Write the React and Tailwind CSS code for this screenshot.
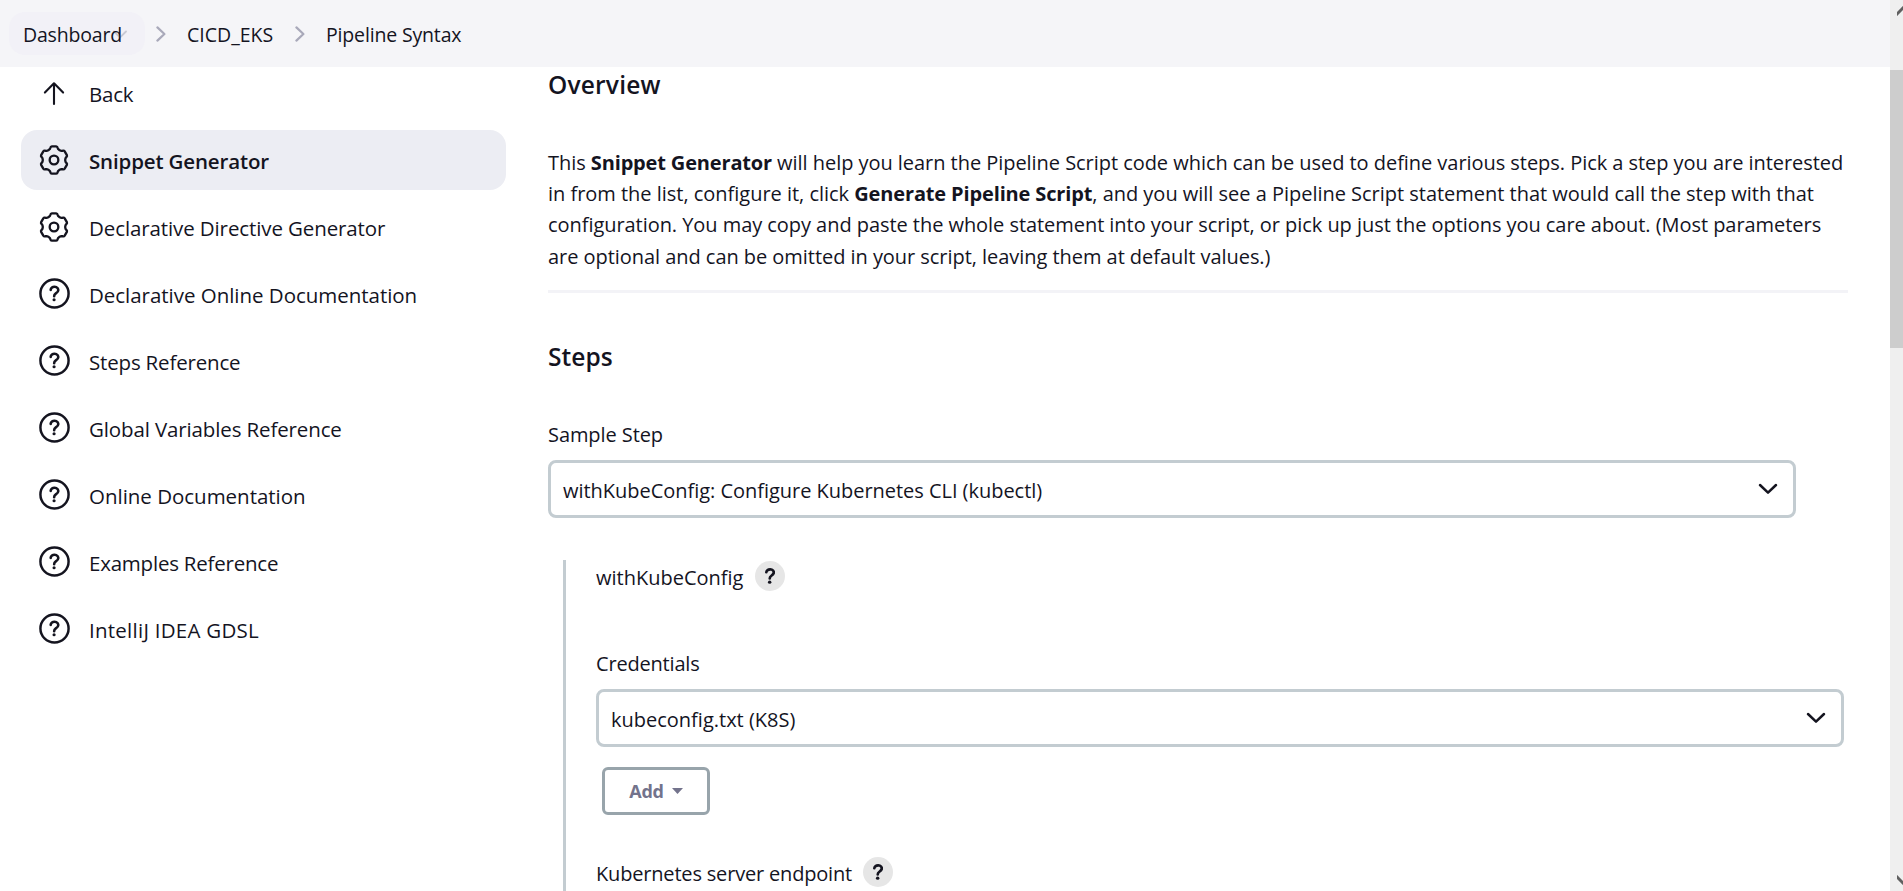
import React from "react";

const QUESTION =
  "M200 202.29s.84-17.5 19.57-32.57C230.68 160.77 244 158.18 256 158c10.93-.14 20.69 1.67 26.53 4.45 10 4.76 29.47 16.38 29.47 41.09 0 26-17 37.81-36.37 50.8S251 281.43 251 296";

// One sixth of the gear outline, drawn around the origin and rotated six times.
const SEXTANT = [[-11, -36.5], [-10, -40.6], [-6.5, -40.8], [6.5, -40.8], [10, -40.6], [11, -36.5], [12.5, -32.7], [16.3, -28.2], [22.1, -27.2]];

function gearPath() {
  let d = "";
  for (let i = 0; i < 6; i++) {
    const a = (i * Math.PI) / 3;
    const p = SEXTANT.map(([x, y]) =>
      `${(x * Math.cos(a) - y * Math.sin(a)).toFixed(2)} ${(x * Math.sin(a) + y * Math.cos(a)).toFixed(2)}`
    );
    d += `${i ? "L" : "M"}${p[0]}Q${p[1]} ${p[2]}L${p[3]}Q${p[4]} ${p[5]}L${p[6]}Q${p[7]} ${p[8]}`;
  }
  return d + "Z";
}
const GEAR = gearPath();

function GearIcon() {
  return (
    <svg viewBox="-48 -48 96 96" className="mr-px size-8" fill="none" stroke="currentColor" strokeWidth="7" strokeLinejoin="round">
      <path d={GEAR} />
      <circle r="13" />
    </svg>
  );
}

function HelpIcon() {
  return (
    <svg viewBox="0 0 512 512" className="size-[35px]" fill="none" stroke="currentColor" strokeLinecap="round">
      <circle cx="256" cy="256" r="206" strokeWidth="36" />
      <path d={QUESTION} strokeWidth="38" />
      <circle cx="250" cy="348" r="23" fill="currentColor" stroke="none" />
    </svg>
  );
}

function ArrowUpIcon() {
  return (
    <svg viewBox="0 0 32 32" className="mr-px size-8" fill="none" stroke="currentColor" strokeWidth="2.1" strokeLinecap="round" strokeLinejoin="round">
      <path d="M6.9 15.6 16 6.3l9.1 9.3M16 6.5v20.4" />
    </svg>
  );
}

function HelpButton() {
  return (
    <button className="grid size-[30px] place-items-center rounded-full bg-[#e6e6e6]">
      <svg viewBox="180 138 150 240" className="h-4 w-2.5" fill="none" stroke="currentColor" strokeLinecap="round">
        <path d={QUESTION} strokeWidth="40" />
        <circle cx="250" cy="350" r="26" fill="currentColor" stroke="none" />
      </svg>
    </button>
  );
}

function CrumbChevron() {
  return (
    <svg viewBox="0 0 10 16" className="h-4 w-2.5" fill="none" stroke="#a9a9ba" strokeWidth="2.2" strokeLinecap="round" strokeLinejoin="round">
      <path d="M1.4 1.4 8.4 8l-7 6.6" />
    </svg>
  );
}

function Select({ children }) {
  return (
    <div className="flex h-[58px] w-[1248px] items-center justify-between rounded-lg border-3 border-[#c3ccd1] pr-[15px] pl-3">
      <span className="pt-[3px] whitespace-nowrap">{children}</span>
      <svg viewBox="0 0 20 12" className="h-3 w-5" fill="none" stroke="currentColor" strokeWidth="2.5" strokeLinecap="round" strokeLinejoin="round">
        <path d="M2 2l8 7.6L18 2" />
      </svg>
    </div>
  );
}

const NAV = [
  ["Back", ArrowUpIcon, "tracking-[-0.2px]"],
  ["Snippet Generator", GearIcon, "font-semibold tracking-[-0.15px]"],
  ["Declarative Directive Generator", GearIcon, "tracking-[-0.11px]"],
  ["Declarative Online Documentation", HelpIcon, "tracking-[-0.03px]"],
  ["Steps Reference", HelpIcon, "tracking-[-0.18px]"],
  ["Global Variables Reference", HelpIcon, "tracking-[-0.13px]"],
  ["Online Documentation", HelpIcon, "tracking-[-0.02px]"],
  ["Examples Reference", HelpIcon, "tracking-[-0.22px]"],
  ["IntelliJ IDEA GDSL", HelpIcon, "tracking-[0.25px]"],
];

function Scrollbar() {
  return (
    <div className="flex w-[13px] shrink-0 flex-col justify-between bg-[#efefef]">
      <div>
        <div className="h-[70px] pl-[7px] pt-1.5">
          <svg viewBox="0 0 6 10" className="h-2.5 w-1.5" fill="none" stroke="#606060" strokeWidth="3">
            <path d="M-1 9 7 1" />
          </svg>
        </div>
        <div className="h-[278px] bg-[#cdcdcd]" />
      </div>
      <div className="pb-1.5 pl-[7px]">
        <svg viewBox="0 0 6 10" className="h-2.5 w-1.5" fill="none" stroke="#606060" strokeWidth="3">
          <path d="M-1 1 7 9" />
        </svg>
      </div>
    </div>
  );
}

export default function App() {
  return (
    <div className="flex h-[891px] w-[1903px] overflow-hidden bg-white font-['Open_Sans','Noto_Sans',sans-serif] text-[20px] leading-[30px] text-[#14141f]">
      <div className="flex min-w-0 flex-1 flex-col">
        <header className="flex h-[67px] shrink-0 items-start bg-[#f5f5f8] pt-3 pl-[9px] text-[19.5px]">
          <div className="relative flex h-[43px] w-[136px] items-center rounded-2xl bg-[#f2f1f7] pl-[14px]">
            <svg viewBox="0 0 14 9" className="absolute top-[18px] left-[104px] h-[9px] w-3.5" fill="none" stroke="#c9c9d3" strokeWidth="1.8" strokeLinecap="round">
              <path d="M1 1.5l6 6 6-6" />
            </svg>
            <span className="relative pt-[3px] tracking-[-0.18px]">Dashboard</span>
          </div>
          <div className="flex h-[43px] items-center">
            <span className="ml-[11px]"><CrumbChevron /></span>
            <span className="ml-[21px] w-[86px] pt-[3px]">CICD_EKS</span>
            <span className="ml-[22px]"><CrumbChevron /></span>
            <span className="ml-[21px] pt-[3px] tracking-[-0.16px] whitespace-nowrap">Pipeline Syntax</span>
          </div>
        </header>

        <div className="flex min-h-0 flex-1">
          <nav className="-mt-1 flex w-[506px] shrink-0 flex-col gap-[7px] pl-[21px] text-[20.5px]">
            {NAV.map(([label, Icon, style]) => (
              <a
                key={label}
                className={`flex h-[60px] shrink-0 items-center rounded-2xl ${label === "Snippet Generator" ? "bg-[#ecedf3]" : ""}`}
              >
                <span className="ml-4 grid w-[35px] place-items-center pb-px"><Icon /></span>
                <span className={`ml-[17px] pt-px whitespace-nowrap ${style}`}>{label}</span>
              </a>
            ))}
          </nav>

          <main className="min-w-0 flex-1 pt-[3px] pl-[42px]">
            <h2 className="text-[24.5px] font-semibold tracking-[0.2px]">Overview</h2>
            <p className="mt-[46.5px] leading-[31.4px] whitespace-nowrap tracking-[-0.045px]">
              This <b className="tracking-[-0.16px]">Snippet Generator</b> will help you learn the Pipeline Script code which can be used to define various steps. Pick a step you are interested
              <br />
              <span className="tracking-[-0.02px]">in from the list, configure it, click <b className="tracking-[-0.14px]">Generate Pipeline Script</b>, and you will see a Pipeline Script statement that would call the step with that</span>
              <br />
              <span className="tracking-[-0.052px]">configuration. You may copy and paste the whole statement into your script, or pick up just the options you care about. (Most parameters</span>
              <br />
              are optional and can be omitted in your script, leaving them at default values.)
            </p>
            <hr className="mt-[18px] w-[1300px] border-t-3 border-[#f3f3f7]" />
            <h2 className="mt-[49px] text-[24.5px] font-semibold tracking-[0.05px]">Steps</h2>
            <div className="mt-[48px] mb-[10px] tracking-[-0.08px]">Sample Step</div>
            <Select><span className="tracking-[-0.03px]">withKubeConfig: Configure Kubernetes CLI (kubectl)</span></Select>

            <section className="mt-[42px] ml-[15px] h-[400px] border-l-3 border-[#c3ccd1] pt-px pl-[30px]">
              <div className="flex h-[31px] items-start gap-3">
                <span className="pt-0.5">withKubeConfig</span>
                <HelpButton />
              </div>
              <div className="mt-[57px] mb-[10px] tracking-[-0.19px]">Credentials</div>
              <Select>kubeconfig.txt (K8S)</Select>
              <button className="mt-5 ml-1.5 flex h-12 w-[108px] items-center justify-center gap-2 rounded-md border-3 border-[#98a4ab] text-[18px] font-bold tracking-[-0.3px] text-[#73738c]">
                Add
                <svg viewBox="0 0 11 6" className="h-1.5 w-[11px]" fill="currentColor"><path d="M0 0h11L5.5 6z" /></svg>
              </button>
              <div className="mt-[42px] flex items-start gap-[11px]">
                <span className="pt-0.5 tracking-[-0.18px]">Kubernetes server endpoint</span>
                <HelpButton />
              </div>
            </section>
          </main>
        </div>
      </div>
      <Scrollbar />
    </div>
  );
}
